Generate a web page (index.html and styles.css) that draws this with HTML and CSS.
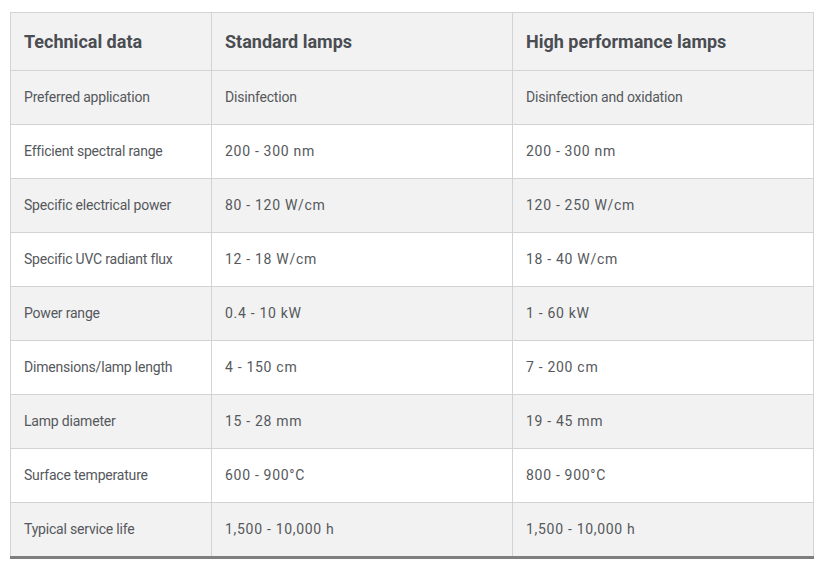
FILE: index.html
```html
<!DOCTYPE html>
<html lang="en">
<head>
<meta charset="utf-8">
<title>Technical data</title>
<link rel="stylesheet" href="styles.css">
</head>
<body>
<table class="spec">
  <colgroup>
    <col class="c1"><col class="c2"><col class="c3">
  </colgroup>
  <thead>
    <tr><th>Technical data</th><th>Standard lamps</th><th>High performance lamps</th></tr>
  </thead>
  <tbody>
    <tr><td>Preferred application</td><td>Disinfection</td><td>Disinfection and oxidation</td></tr>
    <tr><td>Efficient spectral range</td><td class="num">200 - 300 nm</td><td class="num">200 - 300 nm</td></tr>
    <tr><td>Specific electrical power</td><td class="num">80 - 120 W/cm</td><td class="num">120 - 250 W/cm</td></tr>
    <tr><td>Specific UVC radiant flux</td><td class="num">12 - 18 W/cm</td><td class="num">18 - 40 W/cm</td></tr>
    <tr><td>Power range</td><td class="num">0.4 - 10 kW</td><td class="num">1 - 60 kW</td></tr>
    <tr><td>Dimensions/lamp length</td><td class="num">4 - 150 cm</td><td class="num">7 - 200 cm</td></tr>
    <tr><td>Lamp diameter</td><td class="num">15 - 28 mm</td><td class="num">19 - 45 mm</td></tr>
    <tr><td>Surface temperature</td><td class="num">600 - 900°C</td><td class="num">800 - 900°C</td></tr>
    <tr><td>Typical service life</td><td class="num">1,500 - 10,000 h</td><td class="num">1,500 - 10,000 h</td></tr>
  </tbody>
</table>
</body>
</html>
```
FILE: styles.css
```css
html, body { margin: 0; background: #fff; }
body { padding: 12px 0 0 10px; }
.spec {
  border-collapse: collapse;
  width: 804px;
  table-layout: fixed;
  font-family: Roboto, "Liberation Sans", sans-serif;
  border-bottom: 3px solid #7f7f7f;
}
.c1 { width: 201px; }
.c2 { width: 301px; }
.c3 { width: 301px; }
.spec th, .spec td {
  border: 1px solid #d3d3d3;
  text-align: left;
  padding: 0 13px 1px;
  vertical-align: middle;
}
.spec th {
  height: 56px;
  background: #f2f2f2;
  color: #4a4d52;
  font-size: 18px;
  font-weight: bold;
}
.spec td {
  height: 52px;
  color: #55585c;
  font-size: 14px;
  letter-spacing: -0.2px;
}
.spec td.num { letter-spacing: 0.7px; }
.spec tbody tr:nth-child(odd) td { background: #f2f2f2; }
.spec tbody tr:nth-child(even) td { background: #fff; }
.spec tbody tr:last-child td { border-bottom: 3px solid #7f7f7f; }
```
